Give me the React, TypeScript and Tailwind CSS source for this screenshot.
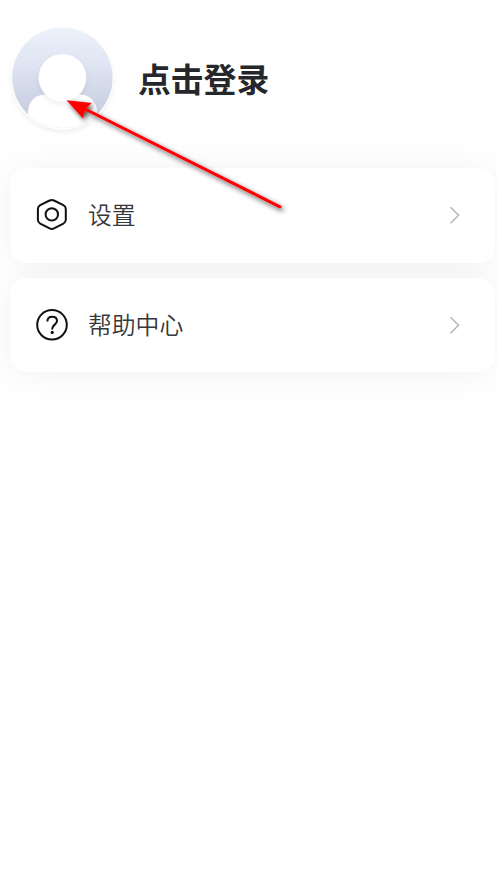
import React from "react";

function Avatar() {
  return (
    <svg width="125" height="140" viewBox="0 0 125 140" className="block shrink-0 overflow-visible">
      <defs>
        <linearGradient id="sky" x1="0" y1="0" x2="0" y2="1">
          <stop offset="0" stopColor="#edf2fb" />
          <stop offset="0.35" stopColor="#dfe5f2" />
          <stop offset="0.8" stopColor="#c8cfe2" />
        </linearGradient>
        <clipPath id="disc">
          <circle cx="62.4" cy="77.7" r="50.2" />
        </clipPath>
        <filter id="soft" x="-30%" y="-30%" width="160%" height="160%">
          <feDropShadow dx="0" dy="2.5" stdDeviation="2.5" floodColor="#000" floodOpacity="0.07" />
        </filter>
      </defs>
      <circle cx="62.4" cy="78.6" r="50.8" fill="#fff" filter="url(#soft)" />
      <g clipPath="url(#disc)">
        <rect x="12" y="27" width="102" height="103" fill="url(#sky)" />
        <rect x="28" y="94.5" width="69" height="50" rx="17" fill="#fff" />
      </g>
      <circle cx="62.4" cy="77.7" r="23.8" fill="#fff" filter="url(#soft)" />
    </svg>
  );
}

function SettingsIcon() {
  return (
    <svg width="32" height="34" viewBox="0 0 32 34" fill="none" stroke="#111" strokeWidth="2">
      <path d="M13.6 2.5Q15.8 1.5 18 2.5L27.4 7.2Q29.8 8.5 29.8 11V21.8Q29.8 24.3 27.4 25.6L18 30.4Q15.8 31.4 13.6 30.4L4.2 25.6Q1.9 24.3 1.9 21.8V11Q1.9 8.5 4.2 7.2Z" />
      <circle cx="15.8" cy="16.4" r="6.2" />
    </svg>
  );
}

function HelpIcon() {
  return (
    <svg width="32" height="34" viewBox="0 0 32 34" fill="none" stroke="#111" strokeWidth="2">
      <circle cx="16" cy="16.8" r="14.8" />
      <path d="M11.4 13.4C11.4 10.6 13.3 8.8 16.2 8.8C19.1 8.8 21 10.6 21 13C21 16.5 16.3 16.8 16.3 20.6V21.4" />
      <circle cx="16.2" cy="24.4" r="1.6" fill="#111" stroke="none" />
    </svg>
  );
}

function Row({ icon, label }: { icon: React.ReactNode; label: string }) {
  return (
    <div className="relative flex h-[94.5px] w-[485px] items-center rounded-[17px] bg-white pl-[26px] pr-[34px]">
      {icon}
      <span className="mb-[2px] ml-5 grow text-[23.8px] leading-8 font-[350] text-[#36383b]">{label}</span>
      <svg width="12" height="18" viewBox="0 0 12 18" fill="none" stroke="#b4b6ba" strokeWidth="1.5">
        <path d="M1.5 1.2L9.5 9.2L1.5 17.2" />
      </svg>
    </div>
  );
}

function PointerArrow() {
  return (
    <svg width="497" height="881" viewBox="0 0 497 881" className="pointer-events-none absolute inset-0">
      <defs>
        <filter id="arrowShadow" x="-10%" y="-10%" width="120%" height="125%">
          <feDropShadow dx="2" dy="2.5" stdDeviation="2.5" floodColor="#000" floodOpacity="0.7" />
        </filter>
      </defs>
      <g filter="url(#arrowShadow)">
        <path d="M84 108.5L280 206.8" stroke="#f00" strokeWidth="3" strokeLinecap="round" />
        <path d="M66.5 100.3L91.7 103L85 109.4L83 118.5Z" fill="#f00" />
      </g>
    </svg>
  );
}

export default function App() {
  return (
    <main className="relative h-[881px] w-[497px] overflow-hidden bg-white font-['Noto_Sans_CJK_SC',sans-serif]">
      <header className="flex h-[168px] items-start">
        <Avatar />
        <h1 className="ml-[13px] mt-[54px] text-[32.8px] leading-[48px] font-bold text-[#25272a]">点击登录</h1>
      </header>
      <section className="ml-[10px] flex w-[485px] flex-col gap-[15px]">
        <div className="rounded-[17px] shadow-[0_2px_36px_rgba(0,0,0,0.06)]">
          <Row icon={<SettingsIcon />} label="设置" />
        </div>
        <div className="rounded-[17px] shadow-[0_2px_36px_rgba(0,0,0,0.06)]">
          <Row icon={<HelpIcon />} label="帮助中心" />
        </div>
      </section>
      <PointerArrow />
    </main>
  );
}
